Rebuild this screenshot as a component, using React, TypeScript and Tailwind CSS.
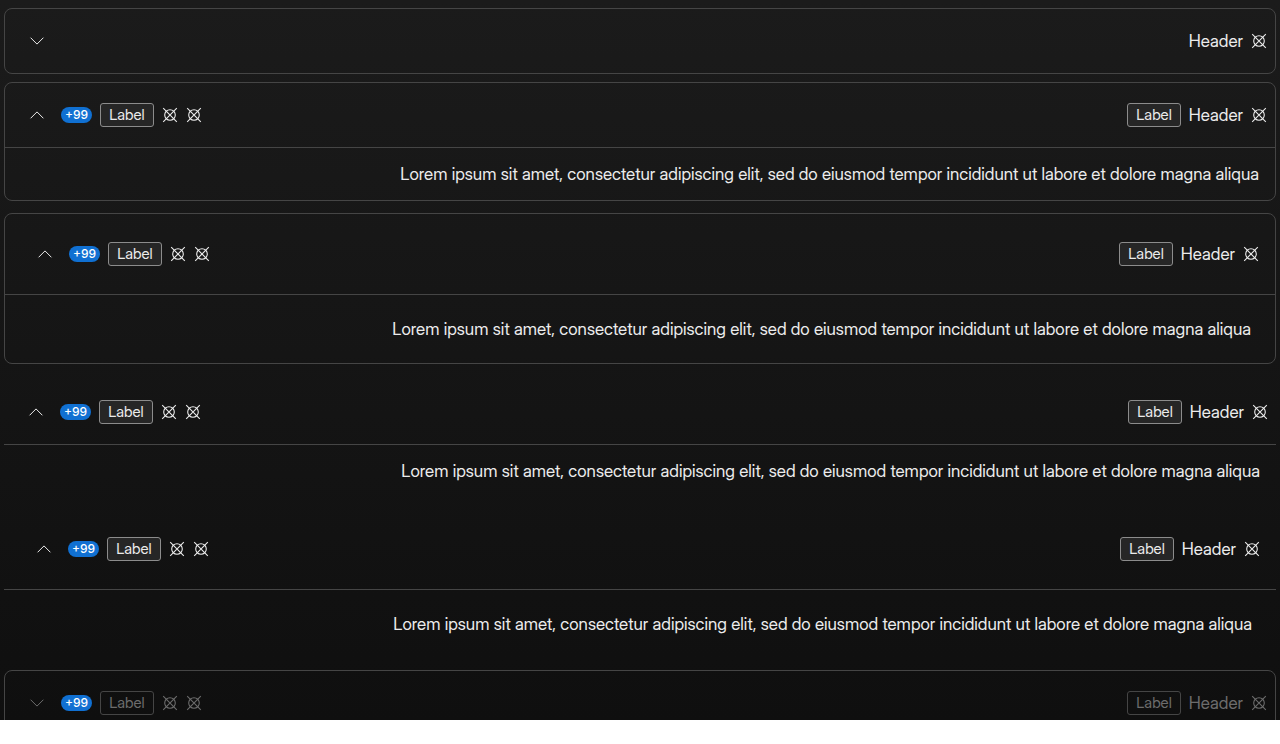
const LOREM =
  'Lorem ipsum sit amet, consectetur adipiscing elit, sed do eiusmod tempor incididunt ut labore et dolore magna aliqua';

function Chevron({ up }: { up: boolean }) {
  return (
    <svg viewBox="0 0 16 16" className="size-4" fill="none" stroke="currentColor" strokeWidth="1" aria-hidden="true">
      <path d={up ? 'M1.6 11.3 8 4.9l6.4 6.4' : 'M1.6 4.7 8 11.1l6.4-6.4'} />
    </svg>
  );
}

function PlaceholderIcon() {
  return (
    <svg viewBox="0 0 16 16" className="size-4 shrink-0" fill="none" stroke="currentColor" strokeWidth="1.1" aria-hidden="true">
      <circle cx="8" cy="8" r="5.3" />
      <path d="M1.2 1.2l13.6 13.6M14.8 1.2L1.2 14.8" />
    </svg>
  );
}

function Label({ disabled }: { disabled?: boolean }) {
  return (
    <span
      className={`flex h-6 items-center rounded-[3px] border px-2 text-[15px] leading-5 ${
        disabled ? 'border-[#454545]' : 'border-[#8c8c8c] bg-[#262626]'
      }`}
    >
      Label
    </span>
  );
}

type PanelProps = {
  open?: boolean;
  bare?: boolean;
  extras?: boolean;
  large?: boolean;
  disabled?: boolean;
  className?: string;
};

function Panel({ open = false, bare = false, extras = true, large = false, disabled = false, className = '' }: PanelProps) {
  return (
    <section className={`shrink-0 border-[#454545] ${bare ? '' : 'rounded-lg border'} ${className}`}>
      <header
        className={`flex items-center justify-between ${large ? 'h-20 pr-4 pl-8' : 'h-16 pr-2 pl-6'} ${
          disabled ? 'text-[#6c6c6c]' : 'text-[#ebebeb]'
        }`}
      >
        <div className="flex items-center gap-2">
          <button type="button" disabled={disabled} aria-expanded={open} aria-label="Toggle panel" className="mr-2">
            <Chevron up={open} />
          </button>
          {extras && (
            <>
              <span className="flex h-4 items-center rounded-full bg-[#1070d2] px-1 font-['Inter','Liberation_Sans',sans-serif] text-xs leading-4 font-medium text-white">
                +99
              </span>
              <Label disabled={disabled} />
              <PlaceholderIcon />
              <PlaceholderIcon />
            </>
          )}
        </div>
        <div className="flex items-center gap-2">
          {extras && <Label disabled={disabled} />}
          <h2 className="text-[17px] leading-6">Header</h2>
          <PlaceholderIcon />
        </div>
      </header>
      {open && (
        <div
          className={`flex items-center justify-end border-t border-[#454545] text-[17px] leading-6 text-[#ebebeb] ${
            large ? 'h-[69px] px-6' : 'h-[53px] px-4'
          }`}
        >
          <p>{LOREM}</p>
        </div>
      )}
    </section>
  );
}

export default function App() {
  return (
    <main className="flex h-[calc(100vh-24px)] flex-col overflow-hidden bg-linear-to-b from-[#1b1b1b] to-[#0f0f0f] px-1 pt-2 font-['Inter_Display','Inter','Liberation_Sans',sans-serif]">
      <Panel extras={false} />
      <Panel open className="mt-2" />
      <Panel open large className="mt-3" />
      <Panel open bare className="mt-4" />
      <Panel open bare large className="mt-3" />
      <Panel disabled className="mt-3" />
    </main>
  );
}
